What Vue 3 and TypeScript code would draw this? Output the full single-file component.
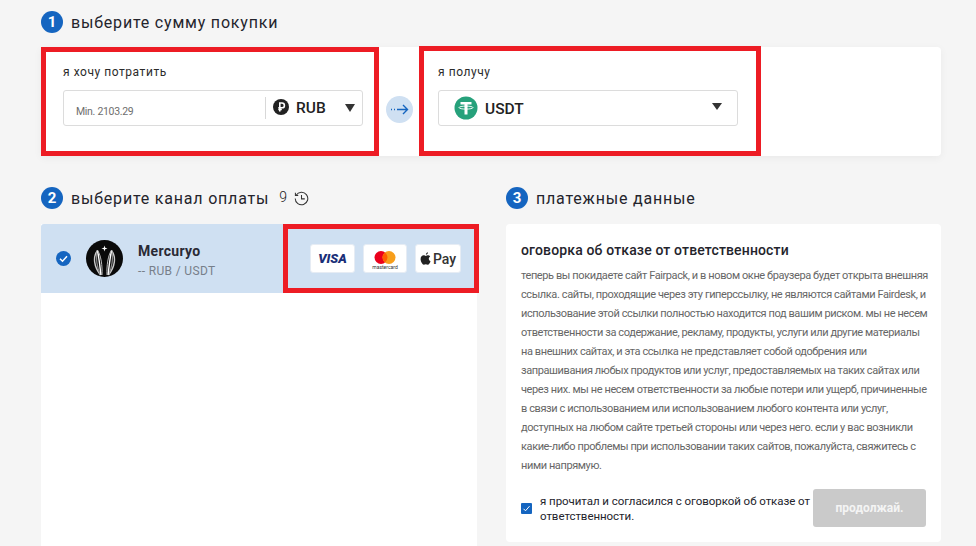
<script setup lang="ts">
const disclaimer: string[] = [
  "теперь вы покидаете сайт Fairpack, и в новом окне браузера будет открыта внешняя",
  "ссылка. сайты, проходящие через эту гиперссылку, не являются сайтами Fairdesk, и",
  "использование этой ссылки полностью находится под вашим риском. мы не несем",
  "ответственности за содержание, рекламу, продукты, услуги или другие материалы",
  "на внешних сайтах, и эта ссылка не представляет собой одобрения или",
  "запрашивания любых продуктов или услуг, предоставляемых на таких сайтах или",
  "через них. мы не несем ответственности за любые потери или ущерб, причиненные",
  "в связи с использованием или использованием любого контента или услуг,",
  "доступных на любом сайте третьей стороны или через него. если у вас возникли",
  "какие-либо проблемы при использовании таких сайтов, пожалуйста, свяжитесь с",
  "ними напрямую.",
];
</script>

<template>
  <div class="page">
    <div class="step-title first">
      <span class="badge">1</span>
      <h2>выберите сумму покупки</h2>
    </div>

    <section class="amount-card">
      <div class="frame spend">
        <label>я хочу потратить</label>
        <div class="field">
          <span class="placeholder">Min. 2103.29</span>
          <span class="divider"></span>
          <svg class="rub-icon" width="16" height="16" viewBox="0 0 16 16">
            <circle cx="8" cy="8" r="8" fill="#222" />
            <path d="M6.800 12.500V4h2.200a2.300 2.300 0 0 1 0 4.800H5.300M5.300 10.500h3.500" fill="none" stroke="#fff" stroke-width="1.600" />
          </svg>
          <span class="coin-name">RUB</span>
          <span class="caret"></span>
        </div>
      </div>

      <div class="arrow-wrap">
        <svg width="27" height="27" viewBox="0 0 27 27">
          <circle cx="13.5" cy="13.5" r="13.5" fill="#cfe0f2" />
          <path d="M5 13.500h1M8 13.500h1M11 13.500h10M17 9l4.500 4.500L17 18" fill="none" stroke="#1565c0" stroke-width="1.400" />
        </svg>
      </div>

      <div class="frame receive">
        <label>я получу</label>
        <div class="field field-usdt">
          <svg width="24" height="24" viewBox="0 0 24 24">
            <circle cx="12" cy="12" r="11.500" fill="#26a17b" />
            <path d="M6.500 6h11v2.600h-4v9.900h-3V8.600h-4z" fill="#fff" />
            <ellipse cx="12" cy="11.600" rx="7" ry="1.500" fill="none" stroke="#fff" stroke-width="0.900" />
          </svg>
          <span class="coin-name usdt">USDT</span>
          <span class="caret small"></span>
        </div>
      </div>
    </section>

    <div class="columns">
      <div class="col-left">
        <div class="step-title">
          <span class="badge">2</span>
          <h2>выберите канал оплаты</h2>
          <span class="count">9</span>
          <svg class="history" width="15" height="15" viewBox="0 0 16 16" fill="none" stroke="#333" stroke-width="1.100">
            <path d="M2.300 4.500A6.700 6.700 0 1 1 1.300 8" />
            <path d="M1.500 1.800v3h3M8 4.300V8.400h3.500" />
          </svg>
        </div>

        <div class="channel-list">
          <div class="channel">
            <svg class="tick" width="15" height="15" viewBox="0 0 15 15">
              <circle cx="7.500" cy="7.500" r="7.500" fill="#1565c0" />
              <path d="M4 7.800l2.500 2.400L11 5.300" fill="none" stroke="#fff" stroke-width="1.500" />
            </svg>
            <svg class="merc" width="37" height="37" viewBox="0 0 37 37" fill="none">
              <circle cx="18.500" cy="18.500" r="18.500" fill="#0a0a0a" />
              <path d="M11.500 10.500C6.500 17 8 27 14.500 35" stroke="#c9c9c9" stroke-width="1.400" />
              <path d="M11.500 10.500C9.500 18 11 28 14.500 35" stroke="#8a8a8a" stroke-width="1.200" />
              <path d="M11.500 10.500C13 18 14 27 15 35" stroke="#fff" stroke-width="1.400" />
              <path d="M11.500 10.500C15 15 16.500 26 16 35" stroke="#bdbdbd" stroke-width="1" />
              <path d="M25.500 10.500C30.500 17 29 27 22.500 35" stroke="#c9c9c9" stroke-width="1.400" />
              <path d="M25.500 10.500C27.500 18 26 28 22.500 35" stroke="#8a8a8a" stroke-width="1.200" />
              <path d="M25.500 10.500C24 18 23 27 22 35" stroke="#fff" stroke-width="1.400" />
              <path d="M25.500 10.500C22 15 20.500 26 21 35" stroke="#bdbdbd" stroke-width="1" />
              <path d="M18.500 5.500l.7 2.300 2.300.7-2.300.7-.7 2.300-.7-2.300-2.300-.7 2.300-.7z" fill="#fff" />
            </svg>
            <div class="channel-text">
              <div class="channel-name">Mercuryo</div>
              <div class="channel-pair">-- RUB / USDT</div>
            </div>
            <div class="frame methods">
              <div class="pay visa"><span>VISA</span></div>
              <div class="pay mc">
                <svg width="22" height="20" viewBox="0 0 22 20">
                  <circle cx="7" cy="7.500" r="6.500" fill="#eb001b" />
                  <circle cx="15" cy="7.500" r="6.500" fill="#f79e1b" />
                  <path d="M11 2.400a6.500 6.500 0 0 1 0 10.200a6.500 6.500 0 0 1 0-10.200z" fill="#ff5f00" />
                </svg>
                <span>mastercard</span>
              </div>
              <div class="pay apple">
                <svg width="11" height="13" viewBox="0 0 11 13">
                  <path d="M8.200 3.300c-1 0-1.800.6-2.400.6s-1.300-.6-2.200-.6C2.200 3.300.6 4.500.6 7c0 2.700 1.900 5.700 3.200 5.700.7 0 1.200-.5 2-.5s1.200.5 2 .5c1.100 0 2.300-2 2.700-3.500-1-.4-1.700-1.300-1.700-2.500 0-1 .6-1.900 1.400-2.300-.5-.7-1.300-1.100-2-1.100zM7.900.3C7 .4 5.900 1.200 5.900 2.700c1 0 2.100-1 2-2.400z" fill="#222" />
                </svg>
                <span>Pay</span>
              </div>
            </div>
          </div>
        </div>
      </div>

      <div class="col-right">
        <div class="step-title">
          <span class="badge">3</span>
          <h2>платежные данные</h2>
        </div>

        <div class="notice">
          <h3>оговорка об отказе от ответственности</h3>
          <p v-for="line in disclaimer" :key="line">{{ line }}</p>
          <div class="agree-row">
            <span class="checkbox">
              <svg width="11" height="11" viewBox="0 0 11 11">
                <path d="M2.500 5.800l2 2 4-4.600" fill="none" stroke="#fff" stroke-width="1" />
              </svg>
            </span>
            <span class="agree-text">я прочитал и согласился с оговоркой об отказе от ответственности.</span>
            <button class="continue">продолжай.</button>
          </div>
        </div>
      </div>
    </div>
  </div>
</template>

<style>
html,
body {
  margin: 0;
  background: #f5f5f5;
  overflow: hidden;
}
</style>

<style scoped>
.page {
  width: 976px;
  height: 546px;
  box-sizing: border-box;
  padding: 11px 35px 0 41px;
  background: #f5f5f5;
  font-family: Roboto, "Liberation Sans", sans-serif;
  color: #222;
  overflow: hidden;
}

.step-title {
  display: flex;
  align-items: center;
  height: 22px;
}

.step-title h2 {
  margin: 0 0 0 8px;
  font-size: 16px;
  font-weight: 400;
  letter-spacing: 0.8px;
  color: #24242c;
}

.badge {
  width: 22px;
  height: 22px;
  border-radius: 50%;
  background: #1565c0;
  color: #fff;
  font-size: 15px;
  font-weight: 700;
  line-height: 22px;
  text-align: center;
}

.amount-card {
  display: flex;
  height: 109px;
  margin-top: 14px;
  background: #fff;
  border-radius: 4px;
  box-shadow: 0 2px 8px rgba(0, 0, 0, 0.05);
}

.frame {
  box-sizing: border-box;
  border: 5px solid #ed1c24;
}

.spend {
  width: 338px;
  padding: 12px 0 0 17px;
}

.receive {
  width: 342px;
  height: 110px;
  margin-top: -1px;
  padding: 13px 0 0 14px;
}

label {
  display: block;
  font-size: 12px;
  line-height: 16px;
  letter-spacing: 0.55px;
  color: #2b2b2b;
}

.field {
  display: flex;
  align-items: center;
  box-sizing: border-box;
  width: 300px;
  height: 36px;
  margin-top: 10px;
  border: 1px solid #dcdcdc;
  border-radius: 3px;
  background: #fff;
}

.placeholder {
  width: 190px;
  padding: 6px 0 0 12px;
  box-sizing: border-box;
  font-size: 10.500px;
  letter-spacing: -0.3px;
  color: #6e6e6e;
}

.divider {
  width: 1px;
  height: 22px;
  background: #d8d8d8;
  margin-left: 11px;
}

.rub-icon {
  margin-left: 7px;
  margin-bottom: 2px;
}

.coin-name {
  margin-left: 7px;
  font-size: 15.500px;
  font-weight: 500;
  color: #222;
}

.caret {
  width: 0;
  height: 0;
  margin-left: auto;
  margin-right: 7px;
  border-style: solid;
  border-width: 8px 5px 0;
  border-color: #333 transparent transparent;
}

.caret.small {
  margin-right: 15px;
  margin-bottom: 3px;
  border-width: 7px 5px 0;
}

.arrow-wrap {
  display: flex;
  align-items: center;
  justify-content: center;
  width: 40px;
  padding-top: 15px;
  box-sizing: border-box;
}

.field-usdt {
  padding-left: 15px;
}

.field-usdt svg {
  flex: none;
}

.usdt {
  margin-left: 7px;
  padding-top: 2px;
}

.columns {
  display: flex;
  gap: 29px;
  margin-top: 31px;
}

.col-left {
  width: 436px;
}

.col-right {
  width: 435px;
}

.count {
  margin-left: 10px;
  margin-bottom: 3px;
  font-size: 14px;
  font-weight: 300;
}

.history {
  margin-left: 7px;
}

.channel-list {
  height: 330px;
  margin-top: 15px;
  background: #fff;
}

.channel {
  display: flex;
  align-items: center;
  height: 69px;
  background: #cfe0f2;
  border-radius: 3px 3px 0 0;
}

.tick {
  flex: none;
  margin-left: 15px;
}

.merc {
  flex: none;
  margin-left: 15px;
}

.channel-text {
  margin-left: 15px;
  padding-top: 3px;
  width: 145px;
  box-sizing: border-box;
  flex: none;
}

.channel-name {
  font-size: 14px;
  font-weight: 700;
  letter-spacing: 0.3px;
  color: #2a2a35;
}

.channel-pair {
  margin-top: 5px;
  font-size: 12px;
  letter-spacing: 0.35px;
  color: #777f8a;
}

.methods {
  display: flex;
  align-items: center;
  flex: none;
  width: 196px;
  height: 69px;
  margin-right: -2px;
  padding-left: 22px;
  gap: 8px;
}

.pay {
  display: flex;
  align-items: center;
  justify-content: center;
  box-sizing: border-box;
  height: 29px;
  background: #fff;
  border: 1px solid #e6ecf4;
  border-radius: 3px;
}

.visa {
  width: 45px;
  font-size: 13px;
  font-weight: 900;
  font-style: italic;
  color: #1a2f78;
}

.mc {
  width: 44px;
  flex-direction: column;
}

.mc svg {
  margin-top: 3px;
}

.mc span {
  margin-top: -6px;
  font-size: 5px;
  line-height: 6px;
  color: #333;
}

.apple {
  width: 46px;
  gap: 2px;
  font-size: 14px;
  font-weight: 500;
  color: #333;
}

.notice {
  box-sizing: border-box;
  height: 318px;
  margin-top: 15px;
  padding: 16px 15px 0;
  background: #fff;
  border-radius: 4px;
}

h3 {
  margin: 0 0 6px;
  font-size: 14px;
  font-weight: 500;
  line-height: 20px;
  letter-spacing: 0.15px;
  color: #24242c;
}

p {
  margin: 0;
  font-size: 11px;
  letter-spacing: -0.4px;
  line-height: 19px;
  white-space: nowrap;
  color: #666;
}

.agree-row {
  display: flex;
  align-items: center;
  margin-top: 14px;
}

.checkbox {
  display: flex;
  align-items: center;
  justify-content: center;
  flex: none;
  width: 11px;
  height: 11px;
  background: #1565c0;
  border-radius: 1px;
}

.agree-text {
  width: 273px;
  margin-left: 8px;
  padding-top: 1px;
  font-size: 11.500px;
  line-height: 15px;
  letter-spacing: -0.05px;
  color: #24242c;
  flex: none;
}

.continue {
  width: 113px;
  height: 38px;
  border: none;
  border-radius: 3px;
  background: #cacaca;
  color: #f4f4f4;
  font-family: inherit;
  font-size: 12px;
  font-weight: 700;
}
</style>
